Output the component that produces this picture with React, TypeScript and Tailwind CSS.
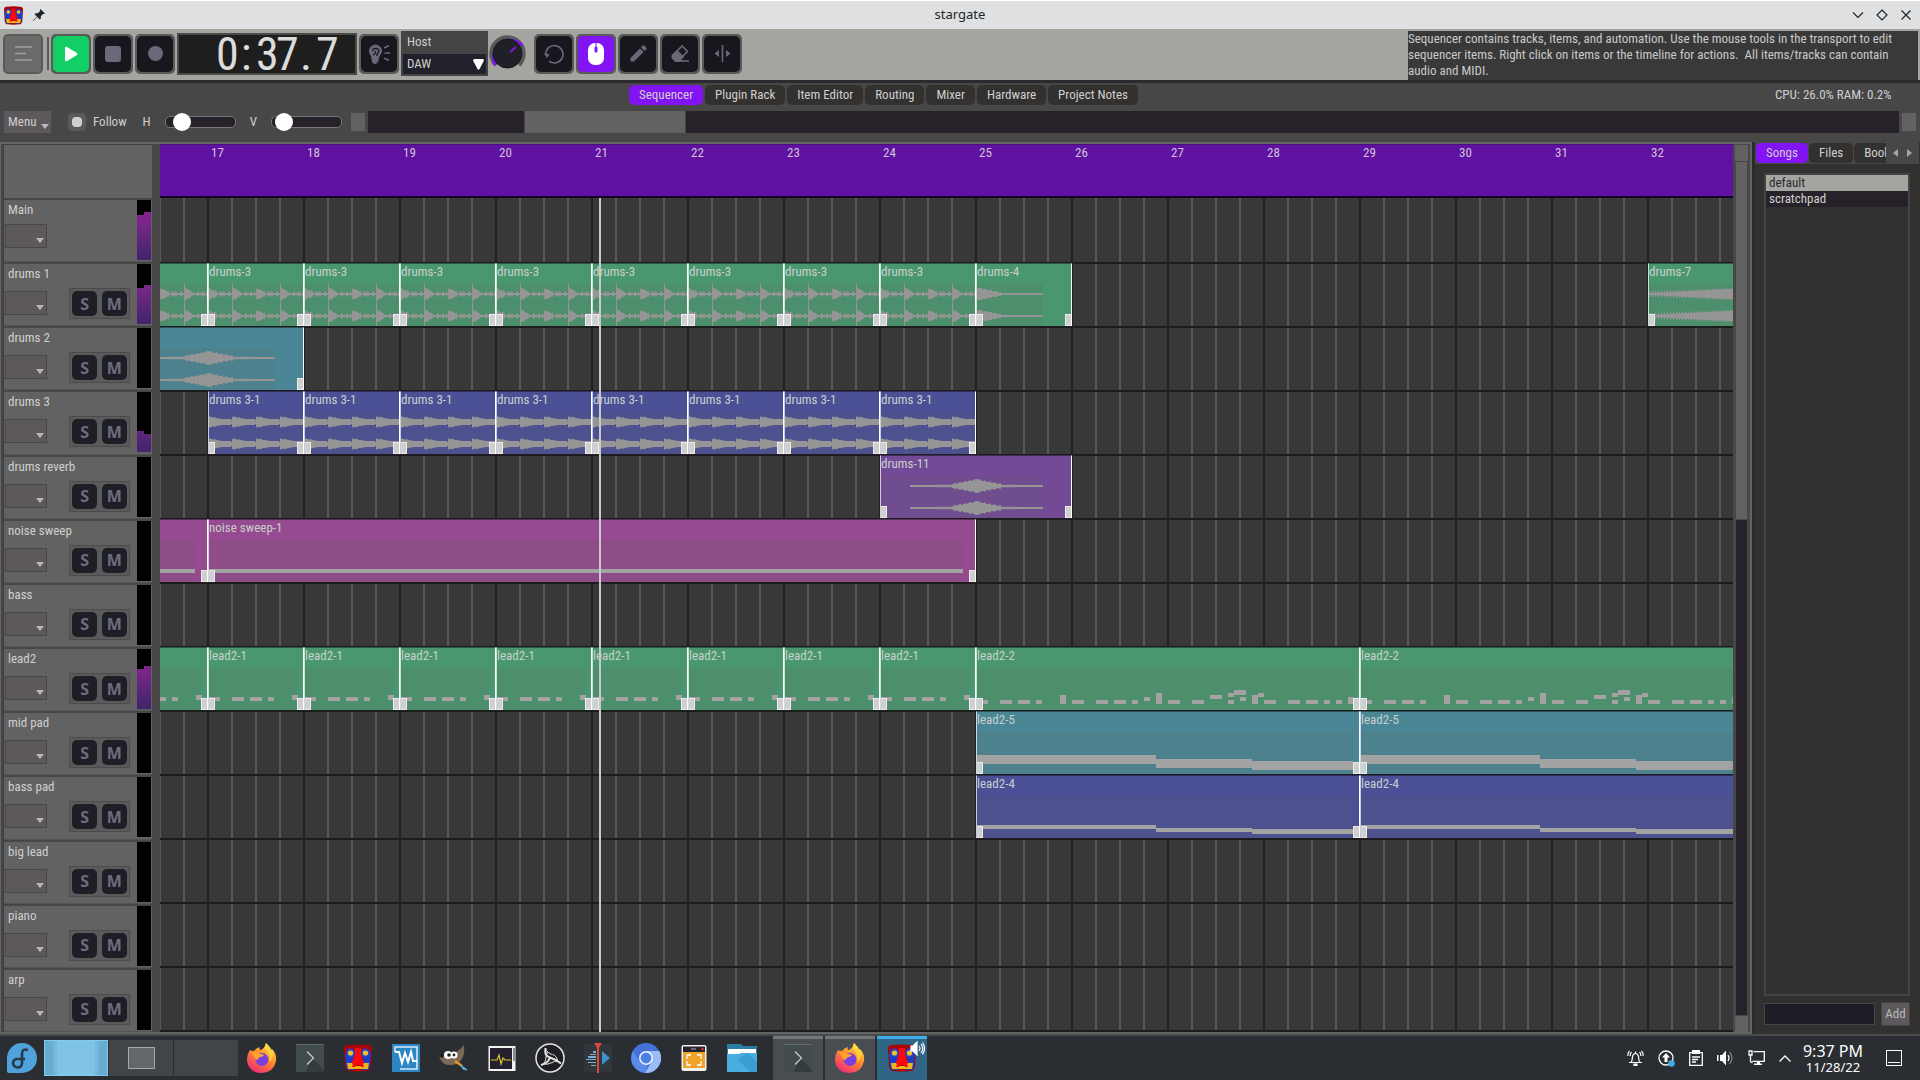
import type { ReactNode } from 'react';

const BAR = 96;
const FIRST_BAR = 16.5;

type Note = [x: number, y: number, w: number, h: number];

type Clip = {
  name: string;
  bar: number;
  bars: number;
  kind: 'beat' | 'loop' | 'swell' | 'tail' | 'rise' | 'notes';
  shade: number;
  notes?: Note[];
};

type Track = {
  name: string;
  color?: string;
  meter?: [number, number];
  clips?: Clip[];
  main?: boolean;
};

const LEAD_1: Note[] = [
  [0, 49, 12, 4],
  [24, 49, 12, 4],
  [42, 49, 12, 4],
  [60, 49, 6, 4],
  [84, 47, 6, 5],
];

const LEAD_2: Note[] = [
  [0, 52, 12, 4], [24, 52, 12, 4], [42, 52, 12, 4], [60, 52, 6, 4], [84, 47, 6, 9],
  [96, 52, 12, 4], [120, 52, 12, 4], [138, 52, 12, 4], [156, 52, 6, 4], [168, 49, 6, 4],
  [180, 45, 6, 11], [192, 52, 12, 4], [216, 52, 12, 4], [234, 47, 12, 4], [252, 45, 6, 4],
  [252, 52, 6, 4], [258, 42, 12, 5], [264, 49, 6, 4], [276, 47, 6, 9], [282, 45, 6, 4],
  [288, 52, 12, 4], [312, 52, 12, 4], [330, 52, 12, 4], [348, 52, 6, 4], [360, 52, 6, 4],
  [372, 49, 6, 7],
];

const LEAD_5: Note[] = [[0, 43, 180, 9], [180, 47, 96, 9], [276, 49, 101, 9]];
const LEAD_4: Note[] = [[0, 49, 180, 4], [180, 52, 96, 4], [276, 53, 101, 5]];

const repeat = (from: number, count: number, clip: Omit<Clip, 'bar' | 'bars'>): Clip[] =>
  Array.from({ length: count }, (_, i) => ({ ...clip, bar: from + i, bars: 1 }));

const TRACKS: Track[] = [
  { name: 'Main', main: true, meter: [45, 48] },
  {
    name: 'drums 1',
    color: 'bg-[#4a976f]',
    meter: [36, 39],
    clips: [
      ...repeat(16, 9, { name: 'drums-3', kind: 'beat', shade: 96 }),
      { name: 'drums-4', bar: 25, bars: 1, kind: 'tail', shade: 67 },
      { name: 'drums-7', bar: 32, bars: 2, kind: 'rise', shade: 192 },
    ],
  },
  {
    name: 'drums 2',
    color: 'bg-[#4a8696]',
    clips: [{ name: 'drums-11', bar: 16, bars: 2, kind: 'swell', shade: 163 }],
  },
  {
    name: 'drums 3',
    color: 'bg-[#4a4f96]',
    meter: [21, 18],
    clips: repeat(17, 8, { name: 'drums 3-1', kind: 'loop', shade: 96 }),
  },
  {
    name: 'drums reverb',
    color: 'bg-[#724a96]',
    clips: [{ name: 'drums-11', bar: 24, bars: 2, kind: 'swell', shade: 163 }],
  },
  {
    name: 'noise sweep',
    color: 'bg-[#964a90]',
    clips: [
      { name: 'noise sweep-1', bar: 9, bars: 8, kind: 'notes', shade: 755, notes: [[0, 49, 755, 4]] },
      { name: 'noise sweep-1', bar: 17, bars: 8, kind: 'notes', shade: 755, notes: [[0, 49, 755, 4]] },
    ],
  },
  { name: 'bass' },
  {
    name: 'lead2',
    color: 'bg-[#4a976f]',
    meter: [40, 43],
    clips: [
      ...repeat(16, 9, { name: 'lead2-1', kind: 'notes', shade: 90, notes: LEAD_1 }),
      { name: 'lead2-2', bar: 25, bars: 4, kind: 'notes', shade: 378, notes: LEAD_2 },
      { name: 'lead2-2', bar: 29, bars: 4, kind: 'notes', shade: 378, notes: LEAD_2 },
    ],
  },
  {
    name: 'mid pad',
    color: 'bg-[#4a8696]',
    clips: [
      { name: 'lead2-5', bar: 25, bars: 4, kind: 'notes', shade: 378, notes: LEAD_5 },
      { name: 'lead2-5', bar: 29, bars: 4, kind: 'notes', shade: 378, notes: LEAD_5 },
    ],
  },
  {
    name: 'bass pad',
    color: 'bg-[#4a4f96]',
    clips: [
      { name: 'lead2-4', bar: 25, bars: 4, kind: 'notes', shade: 378, notes: LEAD_4 },
      { name: 'lead2-4', bar: 29, bars: 4, kind: 'notes', shade: 378, notes: LEAD_4 },
    ],
  },
  { name: 'big lead' },
  { name: 'piano' },
  { name: 'arp' },
];

const BAR_NUMBERS = Array.from({ length: 16 }, (_, i) => 17 + i);

// half-height of the wave at pixel x, 0 where there is no audio
function amplitude(kind: Clip['kind'], x: number) {
  const jitter = ((x * 7919) % 5) / 2;
  if (kind === 'beat') {
    const t = x % 48;
    if (t < 9) return 5 - t * 0.35 + jitter * 0.5;
    if (t < 24) return [12, 13, 15, 16, 20, 21].includes(t) ? 2.5 : 1;
    if (t === 24) return 11;
    if (t < 33) return 6.5 - (t - 24) * 0.6 + jitter * 0.4;
    return [37, 38, 42, 43, 46].includes(t) ? 2.5 : 1;
  }
  if (kind === 'loop') {
    const t = x % 24;
    if (t > 22) return 2;
    return Math.max(3, 5 - t * 0.14) + (t < 8 ? jitter * 0.4 : 0);
  }
  if (kind === 'swell') {
    const d = Math.abs(x - 96);
    if (d > 66) return 0;
    if (d > 25) return d > 40 ? 1 : 1.3;
    return 7 - d * 0.18 + (d > 2 ? -jitter * 0.6 : 0);
  }
  if (kind === 'tail') {
    if (x > 66) return 0;
    return x < 25 ? 7 - x * 0.2 - jitter * 0.5 : 1;
  }
  return x % 3 === 1 ? 3 + x * 0.035 : 1 + x * 0.05;
}

function wavePath(kind: Clip['kind'], width: number, center: number) {
  let d = '';
  for (let x = 0; x < width; x++) {
    const a = amplitude(kind, x);
    if (a > 0) d += `M${x} ${center - a}h1v${a * 2}h-1z`;
  }
  return d;
}

function ClipView({ clip, color }: { clip: Clip; color: string }) {
  const width = clip.bars * BAR;
  return (
    <div
      className={`absolute -top-px h-[63px] overflow-hidden border-t border-r border-l border-t-black/40 border-r-white border-l-white/70 ${color}`}
      style={{ left: (clip.bar - FIRST_BAR) * BAR, width }}
    >
      <svg className="absolute top-0 -left-px h-[62px]" width={width} height={62} aria-hidden="true">
        <rect x="0" y="20" width={clip.shade} height="42" fill="#666" opacity=".14" />
        {clip.notes
          ? clip.notes.map(([x, y, w, h], i) => (
              <rect key={i} x={x} y={y} width={w} height={h} fill="#a3a3a3" />
            ))
          : [30, 52].map((c) => <path key={c} d={wavePath(clip.kind, width, c)} fill="#959595" />)}
      </svg>
      {clip.bar > FIRST_BAR && <span className="absolute top-0 left-0 leading-4 text-[#c8cfcb]">{clip.name}</span>}
      <i className="absolute bottom-0 left-0 h-3 w-1.5 border border-l-0 border-[#ececec] bg-[#cfcfcf]" />
      <i className="absolute right-0 bottom-0 h-3 w-1.5 border border-r-0 border-[#ececec] bg-[#cfcfcf]" />
    </div>
  );
}

function TrackHeader({ track }: { track: Track }) {
  const levels = track.meter ?? [0, 0];
  return (
    <div className="flex flex-1 justify-between border-t-2 border-b border-[#474747] border-b-[#555] bg-[#626262]">
      <div className="flex-1">
        <div className="mt-0.5 pl-1 leading-4 text-[#cfcfcf]">{track.name}</div>
        <div className="mt-1.5 flex items-start justify-between pl-px">
          <button
            aria-label={`${track.name} menu`}
            className={`flex h-6 w-[42px] items-end justify-end border border-[#474747] bg-[#5d585c] pr-0.5 pb-1 ${track.main ? '' : 'mt-[3px]'}`}
          >
            <Caret />
          </button>
          {!track.main && (
            <div className="mr-[7px] flex h-[31px] w-[61px] items-center justify-around border border-[#4c4c4c] bg-[#5a5a5a]">
              {['S', 'M'].map((letter) => (
                <button
                  key={letter}
                  aria-label={`${letter === 'S' ? 'Solo' : 'Mute'} ${track.name}`}
                  className="h-[25px] w-[25px] rounded-[5px] bg-[#1e1e27] text-base leading-none font-bold text-[#6f6d7d] font-['Noto_Sans',sans-serif]"
                >
                  {letter}
                </button>
              ))}
            </div>
          )}
        </div>
      </div>
      <div className="mr-px flex h-[60px] w-3.5 items-end bg-black">
        {levels.map((level, i) => (
          <div
            key={i}
            className="w-[7px] bg-linear-to-t from-[#40256a] to-[#9b1c9b] bg-[length:100%_60px] bg-bottom"
            style={{ height: level }}
          />
        ))}
      </div>
    </div>
  );
}

function Caret() {
  return (
    <svg width="8" height="5" viewBox="0 0 8 5" className="fill-[#b9b9b9]" aria-hidden="true">
      <path d="M0 0h8L4 5z" />
    </svg>
  );
}

function ToolButton({ label, tone = 'bg-[#17171e] text-[#6b6979]', children }: { label: string; tone?: string; children: ReactNode }) {
  return (
    <button aria-label={label} className="h-10 w-10 shrink-0 rounded-[5px] border-2 border-[#5a5a58] bg-[#5a5a58]">
      <span className={`flex h-full w-full items-center justify-center rounded-[5px] ${tone}`}>{children}</span>
    </button>
  );
}

function TitleBar() {
  return (
    <header className="grid h-[29px] grid-cols-[1fr_auto_1fr] items-center border-t border-white bg-[#dee0e2] text-[#232629]">
      <div className="flex items-center gap-2.5 pl-1">
        <MaskIcon size={19} />
        <svg width="12" height="12" viewBox="0 0 12 12" fill="#232629" aria-hidden="true">
          <path d="M7.500 0L12 4.500l-1.200.6-.8-.2-2.200 2.300.1 2.200-1.200 1L4.300 8 .8 11.600 0 12l.4-.9L4 7.700 1.600 5.300l1-1.100 2.200.1L7.100 2l-.2-.8z" />
        </svg>
      </div>
      <h1 className="text-[13px] font-['Noto_Sans',sans-serif]">stargate</h1>
      <div className="flex items-center justify-end gap-3 pr-2">
        <button aria-label="Minimize">
          <svg width="12" height="12" viewBox="0 0 12 12" fill="none" stroke="#232629" strokeWidth="1.200"><path d="M1 3.500l5 5 5-5" /></svg>
        </button>
        <button aria-label="Restore">
          <svg width="12" height="12" viewBox="0 0 12 12" fill="none" stroke="#232629" strokeWidth="1.200"><path d="M6 1l5 5-5 5-5-5z" /></svg>
        </button>
        <button aria-label="Close">
          <svg width="12" height="12" viewBox="0 0 12 12" fill="none" stroke="#232629" strokeWidth="1.200"><path d="M1.500 1.500l9 9m0-9l-9 9" /></svg>
        </button>
      </div>
    </header>
  );
}

function Knob() {
  return (
    <svg width="37" height="37" viewBox="0 0 37 37" fill="none" aria-hidden="true">
      <path d="M6.800 30.200A16.500 16.500 0 1 1 30.200 30.200" stroke="#5a5a5a" strokeWidth="3.500" />
      <path d="M6.800 30.200A16.500 16.500 0 0 1 33 10.500" stroke="#8014f0" strokeWidth="3.500" />
      <circle cx="18.500" cy="18.500" r="14.500" fill="#202127" stroke="#15161b" strokeWidth="1" />
      <path d="M21 17l6-5" stroke="#7a1ad8" strokeWidth="2" />
    </svg>
  );
}

function Transport() {
  return (
    <div className="flex h-[54px] items-center border-b-3 border-[#2c2a2e] bg-[#a4a4a0] pb-0.5 pl-[3px]">
      <button aria-label="Main menu" className="flex h-10 w-10 items-center justify-center rounded-[5px] border-2 border-[#5a5a58] bg-[#6a6a6a]">
        <svg width="17" height="15" viewBox="0 0 17 15" stroke="#a0a09d" strokeWidth="1.500" aria-hidden="true">
          <path d="M0 1h17M0 7.500h11M0 14h17" />
        </svg>
      </button>
      <div className="mr-0.5 ml-1 h-[33px] w-0.5 bg-[#5a5a58]" />
      <div className="flex gap-0.5 pr-0.5">
        <ToolButton label="Play" tone="bg-[#12cf65] text-white">
          <svg width="14" height="16" viewBox="0 0 14 16" fill="currentColor"><path d="M1 2Q1 0 3 1l10 6q1 1 0 2L3 15q-2 1-2-1z" /></svg>
        </ToolButton>
        <ToolButton label="Stop">
          <span className="h-4 w-4 rounded-[3px] bg-[#6b6979]" />
        </ToolButton>
        <ToolButton label="Record">
          <span className="h-[15px] w-[15px] rounded-full bg-[#6b6979]" />
        </ToolButton>
      </div>
      <div className="flex h-[42px] w-[180px] items-center justify-end border-2 border-[#4a4a4a] bg-[#1e1e1e] pr-[19px] text-[46px] leading-none text-[#dcdcdc]">
        {'0:37.7'.split('').map((c, i) => (
          <span key={i} className="w-5 text-center">
            {c}
          </span>
        ))}
      </div>
      <div className="pl-0.5">
        <ToolButton label="Panic">
          <svg width="22" height="23" viewBox="0 0 22 23" fill="none" stroke="currentColor" aria-hidden="true">
            <path d="M1.500 9a6 6 0 0 1 12 0c0 3-2.500 4-3 7s-1 5.500-3.500 5.500-3-2.500-3-5S1.500 12 1.500 9z" fill="#6b6979" />
            <path d="M4.500 9a3.200 3.200 0 0 1 6.300 0c0 2-2 2.500-2 5M5 13c2-1 3-2 2-4" stroke="#17171e" strokeWidth="1.300" />
            <path d="M16 6l5-2.500M16.500 11H22M16 16l5 2.500" strokeWidth="1.500" />
          </svg>
        </ToolButton>
      </div>
      <label className="ml-0.5 flex h-[45px] w-[87px] flex-col justify-between bg-[#444] px-0.5 pt-[3px] pb-0.5 text-[#cfcfcf]">
        <span className="pl-1 leading-4">Host</span>
        <span className="relative block h-5 bg-[#21212b]">
          <select className="h-5 w-full appearance-none bg-transparent pl-1 leading-5 text-[#cfcfcf]">
            <option>DAW</option>
          </select>
          <svg className="absolute top-[5px] right-0.5" width="11" height="11" viewBox="0 0 11 11" fill="#fff" aria-hidden="true"><path d="M1 0h9q1.500 1 .5 2.500L6.500 10q-1 1.500-2 0L.5 2.500Q-.5 1 1 0z" /></svg>
        </span>
      </label>
      <div className="mr-2 ml-px">
        <Knob />
      </div>
      <div className="flex gap-0.5">
        <ToolButton label="Loop">
          <svg width="20" height="20" viewBox="0 0 20 20" fill="none" stroke="currentColor" strokeWidth="1.600"><path d="M5 17.200A8.700 8.700 0 1 0 1.600 11" /><path d="M0 9.500l3 4.500 2.500-4z" fill="currentColor" stroke="none" /></svg>
        </ToolButton>
        <ToolButton label="Select" tone="bg-[#8213f2] text-white">
          <svg width="16" height="22" viewBox="0 0 16 22"><rect width="16" height="22" rx="7" fill="currentColor" /><path d="M8 0v4" stroke="#8213f2" /><rect x="6.500" y="3.500" width="3" height="6" rx="1.500" fill="#8213f2" /></svg>
        </ToolButton>
        <ToolButton label="Draw">
          <svg width="17" height="17" viewBox="0 0 17 17" fill="currentColor"><path d="M.5 16.500V13L10 3.500 13.500 7 4 16.500zM11 2.500l1.500-1.700q1-1 2 0l1.700 1.700q1 1 0 2L14.500 6z" /></svg>
        </ToolButton>
        <ToolButton label="Erase">
          <svg width="19" height="17" viewBox="0 0 19 17" fill="none" stroke="currentColor" strokeWidth="1.600"><path d="M1.500 10.500L11 1l5.500 5.500L7 16H4.500l-3-3.300z" /><path d="M1.500 10.500L6 6l6 6-4 4H4.500l-3-3.300z" fill="currentColor" /><path d="M7 16h11" /></svg>
        </ToolButton>
        <ToolButton label="Split">
          <svg width="17" height="17" viewBox="0 0 17 17" fill="currentColor"><path d="M7.700 0h1.600v17H7.700zM5 5v7L.5 8.500zM12 5v7l4.500-3.500z" /></svg>
        </ToolButton>
      </div>
      <p className="mt-0.5 mr-0.5 -mb-0.5 ml-auto w-[510px] self-stretch bg-[#393939] leading-4 whitespace-pre-wrap text-[#c9c9c9]">
        {'Sequencer contains tracks, items, and automation. Use the mouse tools in the transport to edit sequencer items. Right click on items or the timeline for actions.  All items/tracks can contain audio and MIDI.'}
      </p>
    </div>
  );
}

const PAGES = ['Sequencer', 'Plugin Rack', 'Item Editor', 'Routing', 'Mixer', 'Hardware', 'Project Notes'];

function PageTabs() {
  return (
    <div className="flex h-[22px] items-end">
      <nav className="flex flex-1 justify-center gap-0.5">
        {PAGES.map((page, i) => (
          <button key={page} className={`h-5 rounded-[5px] px-2.5 leading-5 text-[#cfcfcf] ${i === 0 ? 'bg-[#8213f2]' : 'bg-[#32312f]'}`}>
            {page}
          </button>
        ))}
      </nav>
      <div className="w-[153px] pl-2 leading-5 text-[#cfcfcf]">CPU: 26.0% RAM: 0.2%</div>
    </div>
  );
}

const SLIDER =
  'h-3 w-[71px] appearance-none rounded-[5px] border border-[#777] bg-[#272229] [&::-webkit-slider-thumb]:h-[18px] [&::-webkit-slider-thumb]:w-[18px] [&::-webkit-slider-thumb]:appearance-none [&::-webkit-slider-thumb]:rounded-full [&::-webkit-slider-thumb]:bg-white';

function ViewBar() {
  return (
    <div className="flex h-[37px] items-center px-1 pb-1 text-[#cfcfcf]">
      <button className="flex h-[22px] w-[47px] items-center justify-between bg-[#5d585c] pl-1">
        Menu
        <span className="self-end pr-0.5 pb-1">
          <Caret />
        </span>
      </button>
      <label className="ml-[17px] flex items-center gap-[7px]">
        <input
          type="checkbox"
          defaultChecked
          className="h-[18px] w-[18px] appearance-none rounded-[4px] border-4 border-[#5d585c] bg-[#5d585c] checked:bg-[radial-gradient(circle,#cfcfcf_5px,#5d585c_6px)] checked:bg-origin-border"
        />
        Follow
      </label>
      <label className="ml-4 flex items-center gap-3.5">
        H
        <input type="range" defaultValue={15} className={SLIDER} />
      </label>
      <label className="ml-3.5 flex items-center gap-3.5">
        V
        <input type="range" defaultValue={6} className={SLIDER} />
      </label>
      <button aria-label="Scroll left" className="ml-[9px] h-[18px] w-3.5 bg-[#626262]" />
      <div className="ml-[3px] h-[22px] flex-1 bg-[#272229]">
        <div className="ml-[10.2%] h-full w-[10.6%] border-x border-[#444] bg-[#626262]" />
      </div>
      <button aria-label="Scroll right" className="ml-[3px] h-[18px] w-3.5 bg-[#626262]" />
    </div>
  );
}

function Sequencer() {
  return (
    <section className="flex min-w-0 flex-1 border-t-2 border-r-2 border-b-2 border-l border-[#646464] pl-0.5">
      <div className="mr-2 flex w-[149px] shrink-0 flex-col border-l border-[#3d3d3d]">
        <div className="h-[54px] border-t border-[#3d3d3d] bg-[#626262]" />
        {TRACKS.map((track) => (
          <TrackHeader key={track.name} track={track} />
        ))}
      </div>
      <div className="relative min-w-0 flex-1 overflow-hidden bg-[#383838]">
        <div className="relative h-[54px] border-t border-b-2 border-t-[#47107c] border-b-[#160425] bg-[#6111a1]">
          {BAR_NUMBERS.map((n) => (
            <span key={n} className="absolute top-0 leading-4 text-[#cfc4d8]" style={{ left: (n - FIRST_BAR) * BAR + 3 }}>
              {n}
            </span>
          ))}
        </div>
        <div className="bg-[linear-gradient(90deg,#1f1f1f_2px,#383838_2px_24px,#5a5a5a_24px_26px,#383838_26px_48px,#5a5a5a_48px_50px,#383838_50px_72px,#5a5a5a_72px_74px,#383838_74px)] bg-[length:96px_100%] bg-[position:47px_0]">
          {TRACKS.map((track) => (
            <div key={track.name} className={`relative h-16 ${track.main ? '' : 'border-t-2 border-[#1c1c1c]'}`}>
              {track.clips?.map((clip) => (
                <ClipView key={clip.bar} clip={clip} color={track.color ?? ''} />
              ))}
            </div>
          ))}
          <div className="h-0.5 bg-[#1c1c1c]" />
        </div>
        <div className="absolute top-[54px] bottom-0 left-[439px] w-0.5 bg-[#c9c9c9]" />
      </div>
      <div className="flex w-[17px] shrink-0 flex-col items-center gap-px bg-[#474747] pt-px">
        <button aria-label="Scroll up" className="h-4 w-[13px] bg-[#626262]" />
        <div className="w-[11px] flex-1 bg-[#272229]">
          <div className="h-[42%] border-b border-[#474747] bg-[#626262]" />
        </div>
        <button aria-label="Scroll down" className="h-4 w-[13px] bg-[#626262]" />
      </div>
    </section>
  );
}

function SidePanel() {
  return (
    <aside className="flex w-[168px] shrink-0 flex-col border-l-3 border-[#2c2a2e] bg-[#32312f] pr-px text-[#cfcfcf]">
      <div className="flex h-[22px] items-center gap-px bg-[#474747] pl-px">
        <button className="h-5 rounded-[5px] bg-[#8213f2] px-2.5 leading-5">Songs</button>
        <button className="h-5 rounded-[5px] bg-[#32312f] px-2.5 leading-5">Files</button>
        <button className="h-5 w-8 overflow-hidden rounded-l-[5px] bg-[#32312f] pl-2.5 text-left leading-5 whitespace-nowrap">Bookmarks</button>
        <button aria-label="Previous tab" className="ml-1.5">
          <svg width="5" height="8" viewBox="0 0 5 8" fill="#a5a5a5"><path d="M5 0v8L0 4z" /></svg>
        </button>
        <button aria-label="Next tab" className="ml-2">
          <svg width="5" height="8" viewBox="0 0 5 8" fill="#a5a5a5"><path d="M0 0v8l5-4z" /></svg>
        </button>
      </div>
      <ul className="mx-[9px] mt-[9px] flex-1 border-2 border-[#444] leading-4">
        <li className="bg-[#a4a4a0] pl-[3px] text-[#2c2a2e]">default</li>
        <li className="bg-[#272229] pl-[3px]">scratchpad</li>
      </ul>
      <div className="flex items-center gap-1.5 pt-1.5 pr-[9px] pb-2 pl-[9px]">
        <input aria-label="Song name" className="h-[22px] min-w-0 flex-1 border border-[#444] bg-[#1e1d27] px-1" />
        <button className="h-6 w-[29px] border border-[#444] bg-[#5d585c] text-[#b9b9b9]">Add</button>
      </div>
    </aside>
  );
}

function MaskIcon({ size = 28 }: { size?: number }) {
  return (
    <svg width={size} height={size} viewBox="0 0 28 28" aria-hidden="true">
      <path d="M0 5q0-4 4-4 10-1 20 0 4 0 4 4l-1 17q-1 5-4 5-9 1-18 0-3 0-4-5z" fill="#a80509" />
      <path d="M1 9h8v4l3 4-3 6 1 3H5q-3-1-3-5z" fill="#1a3cc8" />
      <path d="M27 9h-8v4l-3 4 3 6-1 3h5q3-1 3-5z" fill="#1a3cc8" />
      <path d="M11 4h6l1 9 3 8H7l3-8z" fill="#f80a0a" />
      <circle cx="6.500" cy="9" r="4.500" fill="#2244d0" />
      <circle cx="21.500" cy="9" r="4.500" fill="#2244d0" />
      <circle cx="6.500" cy="9" r="2.600" fill="#eec326" />
      <circle cx="21.500" cy="9" r="2.600" fill="#eec326" />
      <path d="M3 19h5l2 3h8l2-3h5l-1 6H4z" fill="#f0b51c" />
      <path d="M11 14h6l3 9h-3l-1-2h-4l-1 2H8z" fill="#f80a0a" />
    </svg>
  );
}

function FirefoxIcon() {
  return (
    <svg width="32" height="32" viewBox="0 0 32 32" aria-hidden="true">
      <defs>
        <linearGradient id="fox" x1=".8" y1="0" x2=".2" y2="1">
          <stop offset="0" stopColor="#ffe74a" />
          <stop offset=".45" stopColor="#ff8a2a" />
          <stop offset="1" stopColor="#f0247c" />
        </linearGradient>
      </defs>
      <path d="M4 8q2 1 4 1 2-3 6-4-1 2 0 3 4 0 6-7 3 3 5 7l1-1q5 5 4 12-2 11-14 12Q3 31 1 19q0-7 3-11z" fill="url(#fox)" />
      <circle cx="16" cy="17.500" r="6.500" fill="#7a3fe0" />
      <path d="M5 10q5-1 9 2 3 0 4 1-1 2-4 2-2 1-2 3-4-1-4-4-2-1-3-4z" fill="#ffa22e" />
      <path d="M20 1q-2 4 0 7 5 4 3 12 5-3 4-10-3-6-7-9z" fill="#ffd93c" opacity=".8" />
    </svg>
  );
}

function TerminalIcon() {
  return (
    <svg width="28" height="28" viewBox="0 0 28 28" fill="none" aria-hidden="true">
      <path d="M0 0h28v28H0z" fill="#434c4c" />
      <path d="M16 14l12 12v2H10z" fill="#343b3c" />
      <path d="M0 .5h28" stroke="#5e6b6b" />
      <path d="M11 7.500l6.500 6.500-6.500 6.500" stroke="#c6cccc" strokeWidth="1.300" />
    </svg>
  );
}

const LAUNCHERS: { name: string; icon: ReactNode }[] = [
  { name: 'Firefox', icon: <FirefoxIcon /> },
  { name: 'Konsole', icon: <TerminalIcon /> },
  { name: 'Stargate', icon: <MaskIcon /> },
  {
    name: 'Virtual Machines',
    icon: (
      <svg width="28" height="28" viewBox="0 0 28 28" fill="none">
        <path d="M0 0h28v28H0z" fill="#2c86c4" />
        <path d="M3 8V3h22v22H8" stroke="#d9ecf8" strokeWidth="1.600" />
        <path d="M3 8h4l3 11 3-10 3 9 3-10 2 9h4" stroke="#fff" strokeWidth="2" />
      </svg>
    ),
  },
  {
    name: 'GIMP',
    icon: (
      <svg width="30" height="28" viewBox="0 0 30 28">
        <path d="M25 1q1 9-2 14-4 6-12 6-7 0-9-5-2-1-1-4 2-3 5-2 6 1 11-2 5-3 8-7z" fill="#7b6a55" />
        <circle cx="9" cy="11" r="4" fill="#fff" />
        <circle cx="15" cy="11" r="3.500" fill="#fff" />
        <circle cx="10" cy="11" r="1.800" fill="#222" />
        <circle cx="15" cy="11" r="1.400" fill="#222" />
        <path d="M1 13q0-4 4-3l-1 4z" fill="#1c1c1c" />
        <path d="M16 17l7 5" stroke="#e8912a" strokeWidth="2.500" />
        <path d="M22 21l6 5-4-1z" fill="#5db2e8" stroke="#5db2e8" />
      </svg>
    ),
  },
  {
    name: 'System Monitor',
    icon: (
      <svg width="28" height="28" viewBox="0 0 28 28" fill="none">
        <path d="M.5 2h27v25H.5z" fill="#f3f3f1" />
        <path d="M2 4h22v21H2z" fill="#252030" />
        <path d="M25 4h2v13h-2z" fill="#8a8a8a" />
        <path d="M3 16h6l2-5 2 9 2-6 2 2h6" stroke="#d8c322" strokeWidth="1.200" />
      </svg>
    ),
  },
  {
    name: 'OBS Studio',
    icon: (
      <svg width="30" height="30" viewBox="0 0 30 30" fill="none" stroke="#e4e4e4">
        <circle cx="15" cy="15" r="14" fill="#1f1e22" strokeWidth="1.500" />
        <path d="M15 14.500Q9 13 10.500 5M15 14.500q6 2 11 6M15 14.500q-2 6-9 7.500" strokeWidth="2" />
        <path d="M10.500 5q1 5 7 6.500 5 1.500 5 7M26 20.500q-4-4-9-1-5 3-9 1M6 22q5-2 5-8 0-3 2-5" strokeWidth="1" />
      </svg>
    ),
  },
  {
    name: 'Kdenlive',
    icon: (
      <svg width="28" height="32" viewBox="0 0 28 32">
        <path d="M0 2h28v28H0z" fill="#31363a" />
        <path d="M9 9v2h3V9zM6 12v1h6v-1zM4 14v2h8v-2zM2 17v1h10v-1zM4 20v1h8v-1zM7 23v1h5v-1z" fill="#79aed4" />
        <path d="M18 9l8 7-8 7z" fill="#3b8fca" />
        <path d="M10 1h8l-3 5v25h-2V6z" fill="#d8483f" />
      </svg>
    ),
  },
  {
    name: 'Chromium',
    icon: (
      <svg width="30" height="30" viewBox="0 0 30 30">
        <circle cx="15" cy="15" r="15" fill="#4272d8" />
        <path d="M15 8h13.300A15 15 0 0 1 14 30l7-12z" fill="#9cbcf6" />
        <path d="M2 8l6.500 10.500q3 4 8 3.500L14 30A15 15 0 0 1 2 8z" fill="#5b8be8" />
        <circle cx="15" cy="15" r="7" fill="#eaf1fd" />
        <circle cx="15" cy="15" r="5.400" fill="#4b80e4" />
      </svg>
    ),
  },
  {
    name: 'Spectacle',
    icon: (
      <svg width="26" height="28" viewBox="0 0 26 28" fill="none">
        <rect x=".5" y="1" width="25" height="26" rx="2" fill="#f1f1ef" />
        <path d="M2 2.500h22V8H2z" fill="#27222f" />
        <path d="M2 8h22v16H2z" fill="#f0a32a" />
        <path d="M10 4.500h5v1h-5z" fill="#aaa" />
        <circle cx="21.500" cy="5" r="1.300" fill="#e0303a" />
        <path d="M6 15v-4h4M16 11h4v4M20 17v4h-4M10 21H6v-4" stroke="#fff" strokeWidth="1.300" />
      </svg>
    ),
  },
  {
    name: 'Files',
    icon: (
      <svg width="30" height="28" viewBox="0 0 30 28">
        <path d="M0 0h14l2 2h14v12H0z" fill="#2a7ca8" />
        <path d="M1 5h28v6H1z" fill="#fff" />
        <path d="M0 10h12l2-1h16v19H0z" fill="#4aaee2" />
        <path d="M10 15l13 13H30V18l-9-9z" fill="#3b9dd2" />
      </svg>
    ),
  },
];

function Taskbar() {
  return (
    <footer className="flex h-[46px] items-center border-t-2 border-[#4a4b4d] bg-[#2a2e32] text-[#fcfcfc]">
      <button aria-label="Application launcher" className="ml-[7px]">
        <svg width="30" height="30" viewBox="0 0 30 30" fill="none">
          <path d="M15 0a15 15 0 1 1 0 30H2q-2 0-2-2V15A15 15 0 0 1 15 0z" fill="#50a2dc" />
          <path d="M21 7q-6-2-6 4v9q0 4-4 4.500-4 0-5-4 0-4 4-4.500h8" stroke="#273b4c" strokeWidth="2.600" />
        </svg>
      </button>
      <div className="ml-[7px] flex gap-px">
        <button aria-label="Desktop 1" className="flex h-9 w-16 justify-center border border-[#7ccbf2] bg-[#6aacd0]">
          <span className="h-full w-[46px] bg-[#74b9dd] px-1">
            <span className="block h-full bg-[#7fc3e6]" />
          </span>
        </button>
        <button aria-label="Desktop 2" className="flex h-9 w-16 items-center justify-center bg-[#414549]">
          <span className="h-[22px] w-[27px] border border-[#a5a7a9] bg-[#63666a]" />
        </button>
        <button aria-label="Desktop 3" className="h-9 w-16 bg-[#414549]" />
      </div>
      <div className="flex">
        {LAUNCHERS.map(({ name, icon }) => (
          <button key={name} aria-label={name} className="flex h-11 w-12 items-center justify-center">
            {icon}
          </button>
        ))}
      </div>
      <div className="ml-[7px] flex gap-0.5">
        <button aria-label="Konsole window" className="flex h-11 w-[50px] items-center justify-center border-t-3 border-[#74777a] bg-[#494c50] pb-[3px]">
          <TerminalIcon />
        </button>
        <button aria-label="Firefox window" className="flex h-11 w-[50px] items-center justify-center border-t-3 border-[#74777a] bg-[#494c50] pb-[3px]">
          <FirefoxIcon />
        </button>
        <button aria-label="Stargate window" className="relative flex h-11 w-[50px] items-center justify-center border-t-3 border-[#3daee9] bg-[#2f6484] pb-[3px]">
          <MaskIcon />
          <svg className="absolute top-0.5 right-0.5" width="15" height="15" viewBox="0 0 15 15" fill="none" stroke="#fff" strokeWidth="1.200">
            <path d="M1 5h2l4-4v13l-4-4H1z" fill="#fff" />
            <path d="M9 5q2 2.500 0 5M11 3q3.500 4.500 0 9M12.500 1.500q4 6 0 12" />
          </svg>
        </button>
      </div>
      <div className="ml-auto flex items-center gap-3.5 pr-[18px]">
        <svg width="17" height="16" viewBox="0 0 17 16" fill="none" stroke="#fcfcfc" strokeWidth="1.200" aria-label="Notifications">
          <path d="M2 12.500h13M4 12.500q1.500-2 1.500-6 .5-3 3-3t3 3q0 4 1.500 6M8.500 1.500v2M2.500 1Q.5 3 1 6M14.500 1q2 2 1.500 5M4.500 2Q3 3.500 3.200 6M12.500 2Q14 3.500 13.800 6" />
          <path d="M7 14h3v1.500H7z" fill="#fcfcfc" />
        </svg>
        <svg width="17" height="17" viewBox="0 0 17 17" fill="none" aria-label="Updates">
          <circle cx="8" cy="8" r="7" stroke="#fcfcfc" strokeWidth="1.300" />
          <path d="M8 3l4 4.500H9.500V12h-3V7.500H4z" fill="#fcfcfc" />
          <circle cx="13.500" cy="13.500" r="3.300" fill="#3daee9" />
        </svg>
        <svg width="14" height="16" viewBox="0 0 14 16" fill="none" stroke="#fcfcfc" strokeWidth="1.300" aria-label="Clipboard">
          <path d="M.7 2.700h12.600v12.600H.7z" />
          <path d="M3 0h8v4H3z" fill="#fcfcfc" stroke="none" />
          <path d="M3 7h8M3 9.500h6M3 12h4" />
        </svg>
        <svg width="17" height="16" viewBox="0 0 17 16" fill="none" stroke="#fcfcfc" strokeWidth="1.200" aria-label="Volume">
          <path d="M0 5h1.500v6H0zM3 5h2l4-4.500v15L5 11H3z" fill="#fcfcfc" stroke="none" />
          <path d="M11 5q2 3 0 6" />
          <path d="M12.500 2q5 6 0 12" opacity=".4" />
        </svg>
        <svg width="17" height="16" viewBox="0 0 17 16" fill="none" stroke="#fcfcfc" strokeWidth="1.300" aria-label="Network">
          <path d="M5.500 1.700h10.800v9.600H4.500M1 1h3v4H1zM2.500 5v6.500q0 1 2 1" />
          <path d="M6 13.500h8v1.500H6zM9 12h3v2H9z" fill="#fcfcfc" stroke="none" />
        </svg>
        <svg width="12" height="7" viewBox="0 0 12 7" fill="none" stroke="#fcfcfc" strokeWidth="1.300" aria-label="Show hidden icons">
          <path d="M.5 6.500L6 1l5.500 5.500" />
        </svg>
        <div className="flex w-14 flex-col items-center font-['Noto_Sans',sans-serif]">
          <div className="text-base leading-[18px] whitespace-nowrap">9:37 PM</div>
          <div className="text-[13px] leading-3.5">11/28/22</div>
        </div>
        <button aria-label="Show desktop" className="ml-[11px] flex h-4 w-4 items-end border border-[#fcfcfc] px-px pb-0.5">
          <span className="h-px w-full bg-[#fcfcfc]" />
        </button>
      </div>
    </footer>
  );
}

export default function App() {
  return (
    <div className="flex min-h-screen flex-col bg-[#474747] text-[13px] font-['Roboto_Condensed',Roboto,sans-serif]">
      <TitleBar />
      <Transport />
      <PageTabs />
      <ViewBar />
      <main className="flex flex-1">
        <Sequencer />
        <SidePanel />
      </main>
      <Taskbar />
    </div>
  );
}
